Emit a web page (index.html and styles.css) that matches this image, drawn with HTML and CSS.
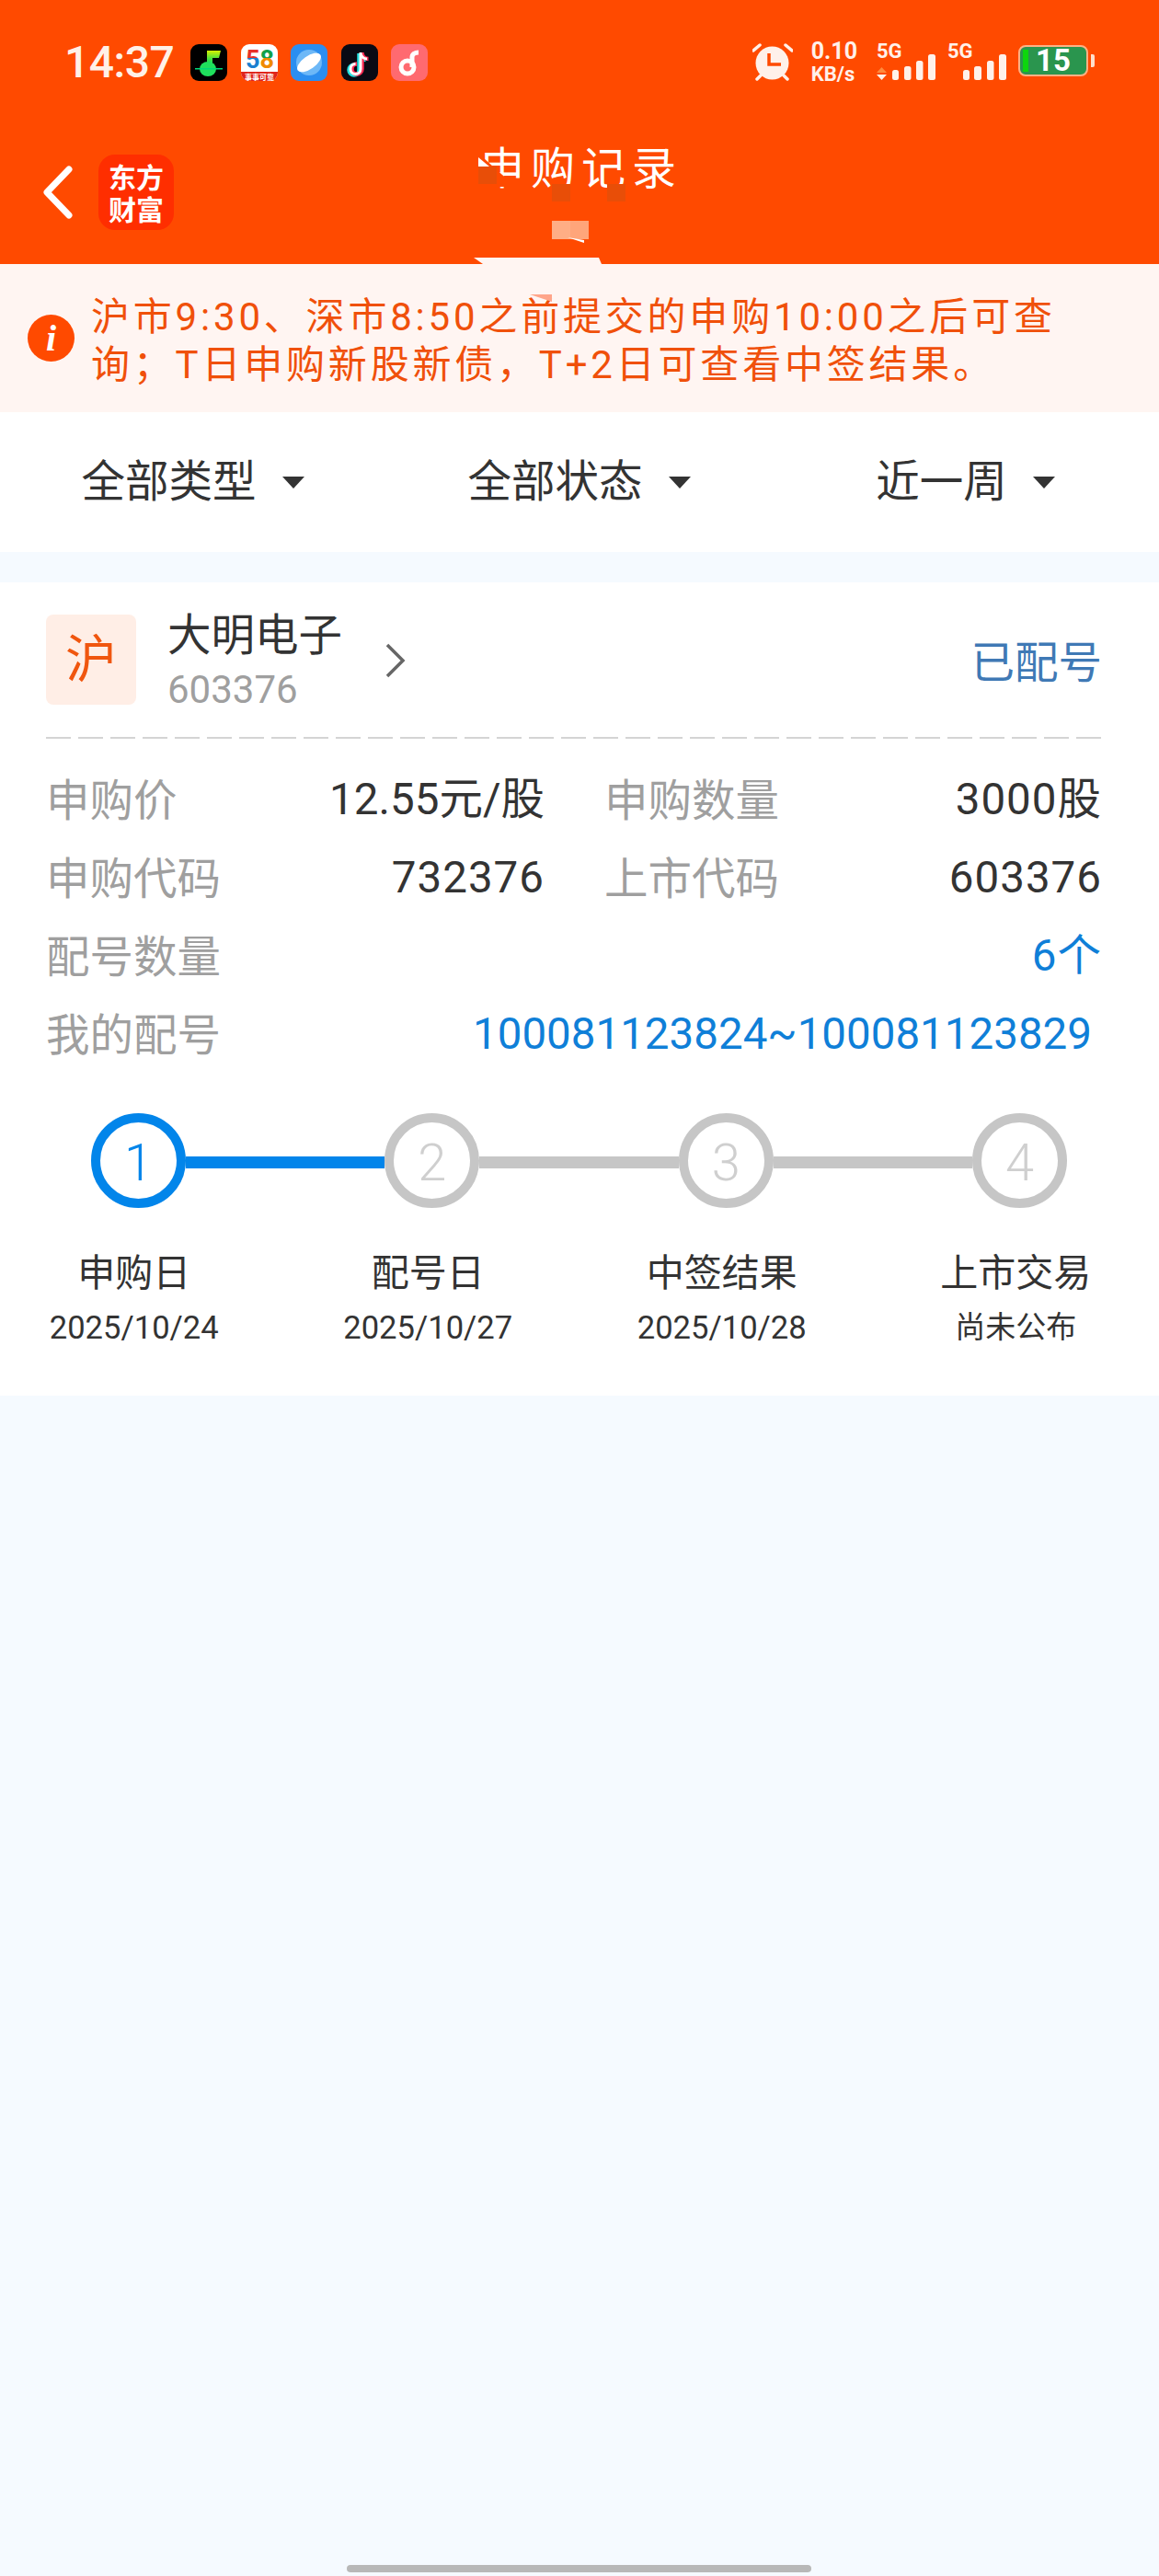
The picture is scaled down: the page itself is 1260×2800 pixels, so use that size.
FILE: index.html
```html
<!DOCTYPE html>
<html lang="zh-CN">
<head>
  <meta charset="UTF-8" />
  <title>申购记录</title>
  <link rel="stylesheet" href="styles.css">
</head>
<body>
  <div class="page">
    <header class="header">
      <div class="statusbar">
        <span class="time">14:37</span>
        <div class="app-icons">
          <svg class="app-icon" viewBox="0 0 40 40">
            <defs>
              <linearGradient id="noteGrad" x1="0" y1="0" x2="0" y2="1">
                <stop offset="0" stop-color="#d8f000" />
                <stop offset="0.55" stop-color="#40e040" />
                <stop offset="1" stop-color="#00d878" />
              </linearGradient>
              <linearGradient id="five" x1="0" y1="0" x2="0" y2="1">
                <stop offset="0.45" stop-color="#e8312a" />
                <stop offset="0.45" stop-color="#1b7fd0" />
              </linearGradient>
              <linearGradient id="eight" x1="0" y1="0" x2="0" y2="1">
                <stop offset="0.45" stop-color="#12a04a" />
                <stop offset="0.45" stop-color="#f08a00" />
              </linearGradient>
            </defs>
            <rect width="40" height="40" rx="9" fill="#000" />
            <path d="M18 7h15l-2 8h-7v9h-6z" fill="url(#noteGrad)" />
            <ellipse cx="19" cy="27" rx="9" ry="8" fill="#1fe05c" />
            <rect x="5" y="26" width="30" height="1.500" fill="#00d878" />
          </svg>
          <svg class="app-icon" viewBox="0 0 40 40">
            <rect width="40" height="40" rx="9" fill="#fff" />
            <text class="logo-58" x="5" y="26"><tspan fill="url(#five)">5</tspan><tspan fill="url(#eight)">8</tspan></text>
            <path d="M0 30h40v1a9 9 0 0 1-9 9H9a9 9 0 0 1-9-9z" fill="#e0251b" />
            <text class="logo-58-sub" x="20" y="38.500">事事可靠</text>
          </svg>
          <svg class="app-icon" viewBox="0 0 40 40">
            <rect width="40" height="40" rx="9" fill="#2b8ef0" />
            <circle cx="20" cy="20" r="14" fill="#6db8f7" />
            <ellipse cx="20" cy="20" rx="15" ry="7" fill="#fff" transform="rotate(-35 20 20)" />
          </svg>
          <svg class="app-icon" viewBox="0 0 40 40">
            <rect width="40" height="40" rx="9" fill="#0a0a14" />
            <path d="M21 9v18a5.500 5.500 0 1 1-5.500-5.500M21 9c0 4 3 7 7 7" fill="none" stroke="#25e0e0" stroke-width="4.500" transform="translate(-1.500 1)" />
            <path d="M21 9v18a5.500 5.500 0 1 1-5.500-5.500M21 9c0 4 3 7 7 7" fill="none" stroke="#fe2c55" stroke-width="4.500" transform="translate(1.500 0)" />
            <path d="M21 9v18a5.500 5.500 0 1 1-5.500-5.500M21 9c0 4 3 7 7 7" fill="none" stroke="#fff" stroke-width="3" />
          </svg>
          <svg class="app-icon" viewBox="0 0 40 40">
            <rect width="40" height="40" rx="9" fill="#ff6a70" />
            <circle cx="18" cy="25" r="7" fill="none" stroke="#fff" stroke-width="5" />
            <path d="M23 25V14c0-3 3-5 7-5" fill="none" stroke="#fff" stroke-width="5" />
          </svg>
        </div>
        <div class="sys-icons">
          <svg class="alarm" viewBox="0 0 44 41">
            <path d="M1 8l7-6M36 2l7 6" stroke="#fff1ea" stroke-width="3.500" stroke-linecap="round" />
            <path d="M9 35l-4 4M34 35l4 4" stroke="#fff1ea" stroke-width="3.500" stroke-linecap="round" />
            <circle cx="21.500" cy="21.500" r="18" fill="#fff1ea" />
            <path d="M18 11v12h13" fill="none" stroke="#ff4a00" stroke-width="3.500" />
          </svg>
          <div class="speed"><span class="speed-num">0.10</span><span class="speed-unit">KB/s</span></div>
          <svg class="net" viewBox="0 -8 64 49">
            <text class="net-label" x="0" y="16">5G</text>
            <path d="M0 32l5.500-6 5.500 6z" fill="#ff8a3c" />
            <path d="M0 34l5.500 6 5.500-6z" fill="#fff1ea" />
            <rect x="17" y="29" width="7" height="11" rx="2.500" fill="#fff1ea" />
            <rect x="30" y="25" width="7.500" height="15" rx="2.500" fill="#fff1ea" />
            <rect x="43" y="19" width="7.500" height="21" rx="2.500" fill="#fff1ea" />
            <rect x="56" y="12" width="8" height="28" rx="2.500" fill="#fff1ea" />
          </svg>
          <svg class="net" viewBox="0 -8 64 49">
            <text class="net-label" x="0" y="16">5G</text>
            <rect x="17" y="29" width="7" height="11" rx="2.500" fill="#fff1ea" />
            <rect x="29" y="25" width="8" height="15" rx="2.500" fill="#fff1ea" />
            <rect x="43" y="19" width="7.500" height="21" rx="2.500" fill="#fff1ea" />
            <rect x="56" y="12" width="8" height="28" rx="2.500" fill="#fff1ea" />
          </svg>
          <div class="battery">
            <div class="battery-body">
              <span class="battery-bar"></span>
              <span class="battery-num">15</span>
            </div>
            <span class="battery-tip"></span>
          </div>
        </div>
      </div>
      <div class="nav">
        <svg class="back" viewBox="0 0 33 58">
          <path d="M29 4L5 29l24 25" fill="none" stroke="#fff" stroke-width="7" stroke-linecap="round" stroke-linejoin="round" />
        </svg>
        <div class="brand">东方<br>财富</div>
        <div class="title">申购记录</div>
      </div>
    </header>

    <div class="notice">
      <span class="notice-icon">i</span>
      <p class="notice-text">沪市9:30、深市8:50之前提交的申购10:00之后可查<br>询；T日申购新股新债，T+2日可查看中签结果。</p>
    </div>

    <div class="filters">
      <div class="filter"><span>全部类型</span><i class="caret"></i></div>
      <div class="filter"><span>全部状态</span><i class="caret"></i></div>
      <div class="filter"><span>近一周</span><i class="caret"></i></div>
    </div>

    <section class="card">
      <div class="card-head">
        <span class="tag">沪</span>
        <div class="stock">
          <div class="stock-name">大明电子</div>
          <div class="stock-code">603376</div>
        </div>
        <svg class="chevron" viewBox="0 0 22 38">
          <path d="M2 2l17 17L2 36" fill="none" stroke="#666" stroke-width="3.500" />
        </svg>
        <span class="card-status">已配号</span>
      </div>

      <div class="info">
        <div class="row"><span class="label">申购价</span><span class="value tight">12.55元/股</span></div>
        <div class="row"><span class="label">申购数量</span><span class="value">3000股</span></div>
        <div class="row"><span class="label">申购代码</span><span class="value">732376</span></div>
        <div class="row"><span class="label">上市代码</span><span class="value">603376</span></div>
        <div class="row wide"><span class="label">配号数量</span><span class="value blue">6个</span></div>
        <div class="row wide last"><span class="label">我的配号</span><span class="value blue tight">100081123824~100081123829</span></div>
      </div>

      <div class="track">
        <span class="dot active">1</span>
        <span class="line active"></span>
        <span class="dot">2</span>
        <span class="line"></span>
        <span class="dot">3</span>
        <span class="line"></span>
        <span class="dot">4</span>
      </div>
      <div class="steps">
        <div class="step"><div class="step-name">申购日</div><div class="step-date">2025/10/24</div></div>
        <div class="step"><div class="step-name">配号日</div><div class="step-date">2025/10/27</div></div>
        <div class="step"><div class="step-name">中签结果</div><div class="step-date">2025/10/28</div></div>
        <div class="step"><div class="step-name">上市交易</div><div class="step-date cjk">尚未公布</div></div>
      </div>
    </section>

    <div class="home-bar"></div>

    <!-- render glitches that sit on top of the title bar and notice -->
    <svg class="glitches" viewBox="0 0 1260 350">
      <path d="M519 172h7l30 27v4h-37z" fill="#ff4a00" />
      <path d="M520 171l12 10h-12z" fill="#fff" />
      <rect x="520" y="181" width="20" height="19" fill="#e84e08" />
      <rect x="600" y="200" width="20" height="19" fill="#e84e08" />
      <rect x="660" y="200" width="20" height="19" fill="#e84e08" />
      <rect x="600" y="240" width="20" height="20" fill="#ffae85" />
      <rect x="620" y="240" width="20" height="20" fill="#ffa57a" />
      <path d="M617 258l18 3v3z" fill="#fff" />
      <path d="M515 280h136l3 7H525z" fill="#fff5f2" />
      <path d="M576 320h24v8z" fill="#ffa58a" />
    </svg>
  </div>
</body>
</html>
```

FILE: styles.css
```css
:root {
  --orange: #ff4a00;
  --bg: #f5faff;
  --text: #333;
  --muted: #9f9f9f;
  --blue: #0f7fd8;
  --step-blue: #0285ea;
  --step-grey: #c6c6c6;
}

html, body {
  margin: 0;
  padding: 0;
  background: var(--bg);
  font-family: Roboto, "Noto Sans CJK SC", sans-serif;
  color: var(--text);
}

.page {
  position: relative;
  width: 1260px;
  height: 2800px;
  display: flex;
  flex-direction: column;
  overflow: hidden;
}

/* header */
.header {
  height: 287px;
  box-sizing: border-box;
  padding-top: 47px;
  background: var(--orange);
}

.statusbar {
  display: flex;
  align-items: center;
  height: 41px;
  padding: 0 70px 0 70px;
}

.time {
  width: 137px;
  font-size: 48px;
  font-weight: 500;
  letter-spacing: -0.5px;
  color: #fff1e8;
  line-height: 41px;
}

.app-icons {
  display: flex;
  gap: 14.6px;
}

.app-icon {
  width: 40px;
  height: 40px;
}

.logo-58 {
  font: 700 27px Roboto, sans-serif;
}

.logo-58-sub {
  font: 700 8px "Noto Sans CJK SC", sans-serif;
  fill: #fff;
  text-anchor: middle;
}

.sys-icons {
  display: flex;
  align-items: center;
  margin-left: auto;
}

.alarm {
  width: 44px;
  height: 41px;
}

.speed {
  display: flex;
  flex-direction: column;
  margin: 0 21px 0 20px;
  color: #fff1ea;
  font-weight: 700;
  line-height: 25px;
}

.speed-num {
  font-size: 25px;
}

.speed-unit {
  font-size: 22px;
}

.net {
  width: 64px;
  height: 49px;
  margin: -8px 13px 0 0;
}

.net-label {
  font: 700 22px Roboto, sans-serif;
  fill: #fff1ea;
}

.battery {
  display: flex;
  align-items: center;
  gap: 3px;
  margin-top: -3px;
}

.battery-body {
  display: flex;
  align-items: stretch;
  width: 76px;
  height: 34px;
  box-sizing: border-box;
  padding: 3px;
  border: 2px solid #ffb184;
  border-radius: 8px;
  background: #2a954e;
}

.battery-bar {
  width: 6px;
  background: #0dd60d;
}

.battery-num {
  margin-left: 8px;
  font-size: 33px;
  font-weight: 700;
  line-height: 24px;
  color: #fff;
}

.battery-tip {
  width: 4px;
  height: 14px;
  border-radius: 0 2px 2px 0;
  background: #ffe0cc;
}

.nav {
  display: flex;
  align-items: center;
  margin-top: 80px;
  padding-left: 46px;
  height: 82px;
}

.back {
  width: 33px;
  height: 58px;
}

.brand {
  width: 82px;
  height: 82px;
  margin-left: 28px;
  border-radius: 18px;
  background: #ff2e00;
  color: #fff;
  font-family: "Noto Sans CJK SC", sans-serif;
  font-size: 30px;
  font-weight: 700;
  line-height: 35px;
  text-align: center;
  box-sizing: border-box;
  padding-top: 6px;
}

.title {
  align-self: flex-start;
  margin-left: 333px;
  font-size: 48px;
  letter-spacing: 7px;
  line-height: 32px;
  color: #fff;
}

/* notice */
.notice {
  display: flex;
  align-items: center;
  height: 161px;
  padding-left: 30px;
  background: #fff5f2;
  color: #f0500a;
}

.notice-icon {
  flex: none;
  width: 51px;
  height: 51px;
  border-radius: 50%;
  background: var(--orange);
  color: #fff;
  font-family: "Liberation Serif", serif;
  font-size: 40px;
  font-weight: 700;
  font-style: italic;
  line-height: 51px;
  text-align: center;
}

.notice-text {
  margin: 6px 0 0 18px;
  font-size: 42px;
  letter-spacing: 3.8px;
  line-height: 52px;
  white-space: nowrap;
}

/* filters */
.filters {
  display: grid;
  grid-template-columns: repeat(3, 1fr);
  align-items: center;
  height: 152px;
  background: #fff;
}

.filter {
  display: flex;
  justify-content: center;
  align-items: center;
  gap: 28px;
  margin-left: -1px;
  font-size: 47.5px;
  line-height: 62px;
}

.caret {
  width: 0;
  height: 0;
  border-left: 12px solid transparent;
  border-right: 12px solid transparent;
  border-top: 13px solid var(--text);
}

/* card */
.card {
  margin-top: 33px;
  padding: 35px 0 49px;
  background: #fff;
}

.card-head {
  display: flex;
  align-items: flex-start;
  margin: 0 62px 0 50px;
  height: 98px;
}

.tag {
  flex: none;
  width: 98px;
  height: 98px;
  border-radius: 8px;
  background: #ffeee6;
  color: #f0560f;
  font-size: 56px;
  line-height: 98px;
  text-align: center;
}

.stock {
  margin: -2px 0 0 34px;
}

.stock-name {
  font-size: 47.5px;
  line-height: 50px;
}

.stock-code {
  margin-top: 12px;
  font-size: 42px;
  line-height: 44px;
  color: var(--muted);
}

.chevron {
  width: 22px;
  height: 38px;
  margin: 31px 0 0 47px;
}

.card-status {
  margin-left: auto;
  font-size: 47.5px;
  line-height: 50px;
  margin-top: 28px;
  color: #3f79b5;
}

.info {
  display: grid;
  grid-template-columns: 542px 541px;
  column-gap: 65px;
  margin: 35px 59px 0 50px;
  padding-top: 25px;
  background: repeating-linear-gradient(90deg, #d4d4d4 0 27px, transparent 27px 35px) top left / 1151px 2px no-repeat;
  width: 1151px;
}

.row {
  display: flex;
  justify-content: space-between;
  align-items: center;
  height: 85px;
}

.row.wide {
  grid-column: 1 / -1;
  width: 1148px;
}

.row.last .value {
  margin-right: 11px;
}

.label {
  padding-top: 4px;
  font-size: 47.5px;
  line-height: 56px;
  color: var(--muted);
}

.value {
  font-size: 47.5px;
  letter-spacing: 1px;
  line-height: 56px;
  color: var(--text);
}

.value.tight {
  letter-spacing: 0;
}

.value.blue {
  color: var(--blue);
}

/* steps */
.track {
  display: flex;
  align-items: center;
  margin: 44px 100px 0 99px;
}

.dot {
  flex: none;
  width: 103px;
  height: 103px;
  box-sizing: border-box;
  border: 10px solid var(--step-grey);
  border-radius: 50%;
  color: #cfcfcf;
  font-size: 56px;
  font-weight: 300;
  line-height: 89px;
  text-align: center;
}

.dot.active {
  border-color: var(--step-blue);
  color: var(--step-blue);
}

.line {
  flex: 1;
  height: 13px;
  margin-top: 3px;
  background: var(--step-grey);
}

.line.active {
  background: var(--step-blue);
}

.steps {
  display: grid;
  grid-template-columns: repeat(4, 319.5px);
  margin: 47px -4px 0 -14px;
}

.step {
  text-align: center;
}

.step-name {
  font-size: 41px;
  line-height: 48px;
}

.step-date {
  margin-top: 10px;
  font-size: 34.6px;
  line-height: 50px;
}

.step-date.cjk {
  font-size: 33px;
}

/* misc */
.home-bar {
  width: 505px;
  height: 8px;
  margin: auto 0 4px 377px;
  border-radius: 4px;
  background: #b8b8b8;
}

.glitches {
  position: absolute;
  top: 0;
  left: 0;
  width: 1260px;
  height: 350px;
  pointer-events: none;
}
```
